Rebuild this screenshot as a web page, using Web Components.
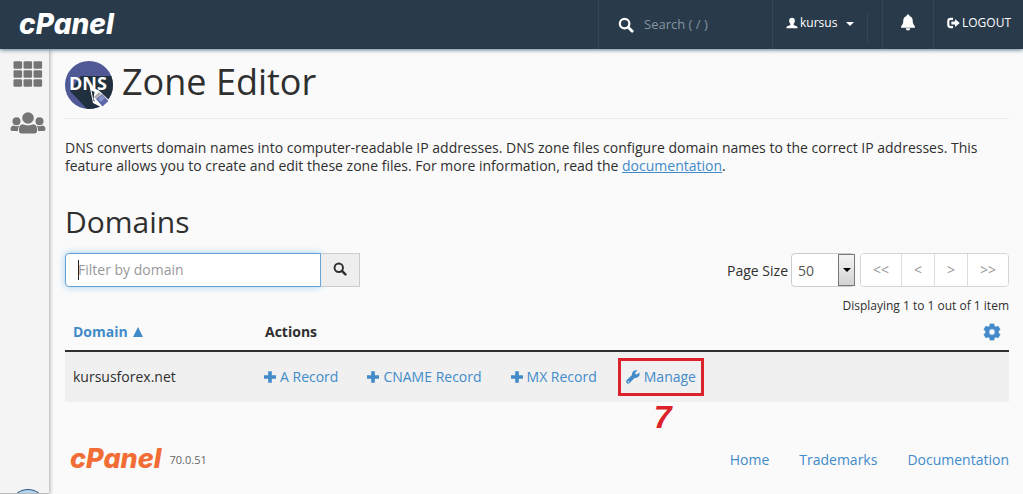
<!DOCTYPE html>
<html lang="en">
<head>
<meta charset="utf-8">
<title>cPanel - Zone Editor</title>
<style>
  body { margin: 0; background: #fafafa; color: #2f2f2f; font: 14px/18px "Open Sans", "Noto Sans", sans-serif; --link: #428bca; --bar: #293a4a; }
</style>
</head>
<body>
<cp-app>
  <cp-header slot="header" user="kursus"></cp-header>
  <cp-sidebar slot="side"></cp-sidebar>
  <cp-title>Zone Editor</cp-title>
  <cp-intro>DNS converts domain names into computer-readable IP addresses. DNS zone files configure domain names to the correct IP addresses. This feature allows you to create and edit these zone files. For more information, read the <a href="#documentation">documentation</a>.</cp-intro>
  <cp-section heading="Domains">
    <cp-filter></cp-filter>
    <cp-pager></cp-pager>
    <zone-table slot="body"></zone-table>
  </cp-section>
  <cp-footer version="70.0.51"></cp-footer>
</cp-app>

<script>
const define = (name, html, setup) => {
  const template = document.createElement('template');
  template.innerHTML = '<style>:host,*{box-sizing:border-box}</style>' + html;
  customElements.define(name, class extends HTMLElement {
    constructor() {
      super();
      this.attachShadow({ mode: 'open' }).append(template.content.cloneNode(true));
    }
    connectedCallback() { if (setup) setup(this, this.shadowRoot); }
  });
};

const icons = {
  search: ['0 0 16 16', '<circle cx="6.6" cy="6.6" r="4.8" fill="none" stroke="currentColor" stroke-width="2.2"/><path d="M10.2 10.200L14.200 14.200" stroke="currentColor" stroke-width="2.800" stroke-linecap="round"/>'],
  user: ['0 0 14 14', '<path d="M7 .8C9.200.8 10.300 2.300 10.300 4.300C10.300 5.900 9.700 7.200 8.900 8V9.200L12.400 10.700C13.300 11.100 13.500 11.800 13.500 13H.5C.5 11.800.7 11.100 1.600 10.700L5.100 9.200V8C4.300 7.200 3.700 5.900 3.700 4.300C3.700 2.300 4.800.8 7 .8Z"/>'],
  bell: ['0 0 16 18', '<path d="M8 .5C9 .5 9.500 1.100 9.500 2C12 2.700 13 4.700 13 7C13 10 13.700 11.500 15.300 13V14.500H.7V13C2.300 11.500 3 10 3 7C3 4.700 4 2.700 6.500 2C6.500 1.100 7 .5 8 .5ZM5.700 15H10.300C10.300 16.500 9.300 17.400 8 17.400S5.700 16.500 5.700 15Z"/>'],
  logout: ['0 0 14 12', '<path d="M6.500 1.500H4Q1.400 1.500 1.400 4V8Q1.400 10.500 4 10.500H6.500" fill="none" stroke="currentColor" stroke-width="2.300"/><path d="M4.700 4.500H8.700V1.700L13.700 6L8.700 10.300V7.500H4.700Z"/>'],
  plus: ['0 0 12 12', '<path d="M4.200.2H7.800V4.200H12V7.800H7.800V11.800H4.200V7.800H0V4.200H4.200Z"/>'],
  wrench: ['0 0 14 14', '<path d="M13.300 2.500L10.900 4.500L9.300 3.900L9.200 2.500L11.500.5C9.400-.3 6.900.6 6.200 3C5.900 4.100 6.100 4.800 5.700 5.300L.8 10.100C-.2 11.100.1 12.200.8 13C1.500 13.900 2.700 14 3.700 13.100L8.200 8.300C8.700 7.900 9.500 8 10.500 7.700C13.200 7.100 14.200 4.500 13.300 2.500ZM2.300 11A.7.7 0 1 1 2.200 12.300A.7.7 0 0 1 2.300 11Z"/>'],
  cog: ['0 0 20 20', '<path fill-rule="evenodd" stroke="currentColor" stroke-width=".8" stroke-linejoin="round" d="M8 1H12L12.600 3.600L14.100 4.400L16.800 3.600L19 7.200L17 9V11L19 12.800L16.800 16.400L14.100 15.600L12.600 16.400L12 19H8L7.400 16.400L5.900 15.600L3.200 16.400L1 12.800L3 11V9L1 7.200L3.200 3.600L5.900 4.400L7.400 3.600ZM10 6.500A3.500 3.500 0 1 0 10 13.500A3.500 3.500 0 1 0 10 6.500Z"/>'],
  grid: ['0 0 30 26', [0, 9, 18].map(y => [0, 10, 20].map(x => `<rect x="${x + .5}" y="${y + .3}" width="8.600" height="7.500" rx="1.200"/>`).join('')).join('')],
  users: ['0 0 36 22', '<circle cx="18" cy="6" r="5.800"/><circle cx="6.500" cy="9.300" r="4"/><circle cx="29.500" cy="9.300" r="4"/><path d="M12.500 12.300Q18 14.600 23.500 12.300Q27 12.700 27 17V19Q27 21.500 24.500 21.500H11.500Q9 21.500 9 19V17Q9 12.700 12.500 12.300ZM3.500 13.400Q6 14.700 9 13.700Q8 15.500 8 19H2Q.5 19 .5 17.200Q.5 13.800 3.500 13.400ZM32.500 13.400Q30 14.700 27 13.700Q28 15.500 28 19H34Q35.500 19 35.500 17.200Q35.500 13.800 32.500 13.400Z"/>'],
  sort: ['0 0 10 10', '<path d="M5 0L10 10H0Z"/>'],
  caret: ['0 0 8 4', '<path d="M0 0H8L4 4Z"/>']
};
define('cp-icon', `<style>:host{display:inline-block;flex:none;width:14px;height:14px}svg{display:block;width:100%;height:100%;fill:currentColor}</style><svg aria-hidden="true"></svg>`, (el, root) => {
  const [box, art] = icons[el.getAttribute('name')];
  const svg = root.querySelector('svg');
  svg.setAttribute('viewBox', box);
  svg.innerHTML = art;
});

define('cp-brand', `<style>:host{display:block;font:italic 800 var(--brand-size,28px)/24px Inter,"Open Sans",sans-serif}</style>cPanel`);

define('cp-app', `<style>
  :host{display:flex;flex-direction:column;min-height:100vh}
  .body{display:flex;flex:1}
  main{flex:1;min-width:0;padding:12px 14px 0 16px}
</style><slot name="header"></slot><div class="body"><slot name="side"></slot><main><slot></slot></main></div>`);

define('cp-header', `<style>
  :host{display:flex;align-items:stretch;height:49px;background:var(--bar);color:#fff;position:relative;z-index:2;box-shadow:0 1px 4px #5b7b90}
  .brand{margin:12px auto 0 19px;color:#fff;text-decoration:none}
  .cell{display:flex;align-items:center;border-left:1px solid #364858}
  .search{width:174px;padding-left:19px;gap:10px}
  .search cp-icon{width:16px;height:16px}
  input{width:110px;height:18px;margin-bottom:2px;border:0;padding:0;background:none;color:#fff;font:13px/18px "Open Sans",sans-serif;outline:0}
  input::placeholder{color:#8795a0;opacity:1}
  button,a.out{font:12px/18px "Open Sans",sans-serif;color:#fff;background:none;border:0;padding:0;text-decoration:none;display:flex;align-items:center}
  .user{width:110px;padding:0 14px 4px 13px}
  .user button{gap:2px;width:100%;height:30px;white-space:nowrap}
  .user cp-icon{width:12px;height:12px}
  .user cp-icon.c{width:8px;height:4px;margin:2px 0 0 7px}
  .rule{width:1px;height:30px;background:#364858;margin:10px 0 0 auto}
  .bell{width:51px;justify-content:center;padding-bottom:4px}
  .bell cp-icon{width:16px;height:17px}
  .logout{width:90px;padding:0 0 4px 13px}
  .out{gap:2px}
  .out cp-icon{width:13px;height:12px}
</style>
<a class="brand" href="#home"><cp-brand></cp-brand></a>
<label class="cell search"><cp-icon name="search"></cp-icon><input type="text" placeholder="Search ( / )" aria-label="Search"></label>
<div class="cell user"><button type="button"><cp-icon name="user"></cp-icon><span id="name"></span><cp-icon class="c" name="caret"></cp-icon><span class="rule"></span></button></div>
<div class="cell bell"><button type="button" aria-label="Notifications"><cp-icon name="bell"></cp-icon></button></div>
<div class="cell logout"><a class="out" href="#logout"><cp-icon name="logout"></cp-icon>LOGOUT</a></div>`,
(el, root) => { root.getElementById('name').textContent = el.getAttribute('user'); });

define('cp-sidebar', `<style>
  :host{display:flex;flex-direction:column;align-items:center;flex:none;width:49px;padding:12px 0 0 6px;background:#f4f4f4;box-shadow:1px 0 4px #aaa;color:#757575}
  a{color:inherit}
  cp-icon{display:block}
  .grid{width:30px;height:26px}
  .users{width:36px;height:22px;margin-top:25px}
  .status{align-self:stretch;margin:auto 0 0 -6px;padding-left:9px;height:5px;overflow:hidden;border-bottom:1px solid #bbb}
  .status::before{content:"";display:block;width:36px;height:36px;border:1px solid #2c5580;border-radius:50%;background:#b5d3ee}
</style><a href="#home" aria-label="Home"><cp-icon class="grid" name="grid"></cp-icon></a><a href="#users" aria-label="User manager"><cp-icon class="users" name="users"></cp-icon></a><div class="status"></div>`);

define('cp-title', `<style>
  :host{display:flex;gap:9px;padding-bottom:9px;border-bottom:1px solid #eaeaea}
  svg{flex:none;width:48px;height:48px}
  h1{margin:0;font-size:36px;line-height:42px;font-weight:400}
</style><svg viewBox="0 0 48 48" aria-hidden="true">
  <defs><clipPath id="disc"><circle cx="24" cy="24" r="24"/></clipPath></defs>
  <g clip-path="url(#disc)"><rect width="48" height="48" fill="#505996"/>
  <path d="M16 15H48V48H22L5 30Z" fill="#20303e"/></g>
  <text x="4" y="29" font-family="Open Sans" font-weight="700" font-size="18" fill="#fff">DNS</text>
  <path d="M24.500 25L34 29.500L45.500 40.500L39 47.500L28 42Z" fill="#fff"/>
  <path d="M26.500 29.500L29.500 31L28.500 38L30 40.500L28.500 40Z" fill="#20303e"/>
  <path d="M29 36L34 31L36 33L31 38Z" fill="#aaa"/>
  <path d="M31 38L37 33L43.500 40L37.500 45.500Z" fill="#5c68a8"/><path d="M33 38L37 34L40 37L36 41Z" fill="#8995c8"/>
</svg><h1><slot></slot></h1>`);

define('cp-intro', `<style>:host{display:block;margin-top:20px}p{margin:0}::slotted(a){color:var(--link);text-decoration:underline}</style><p><slot></slot></p>`);

define('cp-section', `<style>
  :host{display:block;margin-top:30px}
  h2{margin:0 0 15px;font-size:30px;line-height:33px;font-weight:400}
  .tools{display:flex;justify-content:space-between}
</style><h2></h2><div class="tools"><slot></slot></div><slot name="body"></slot>`,
(el, root) => { root.querySelector('h2').textContent = el.getAttribute('heading'); });

define('cp-filter', `<style>
  :host{display:block}
  form{display:flex;position:relative}
  form::before{content:"";position:absolute;left:13px;top:7px;width:1px;height:20px;background:#222}
  input{width:256px;height:34px;padding:0 12px 2px;border:1px solid #66a3d8;border-radius:4px 0 0 4px;background:#fff;box-shadow:0 0 7px #9fcdf0;font:14px/20px "Open Sans",sans-serif;color:#555;outline:0}
  input::placeholder{color:#999;opacity:1}
  button{width:39px;height:34px;padding:0;border:1px solid #ccc;border-left:0;background:#eee;color:#2f2f2f;display:grid;place-items:center}
  button cp-icon{margin-bottom:2px}
</style><form><input type="text" placeholder="Filter by domain" aria-label="Filter by domain"><button type="button" aria-label="Search domains"><cp-icon name="search"></cp-icon></button></form>`);

define('cp-pager', `<style>
  :host{display:block}
  .row{display:flex;align-items:center;justify-content:flex-end}
  label{margin:2px 3px 0 0}
  .pick{position:relative;margin-right:5px}
  select{display:block;appearance:none;width:64px;height:34px;padding:2px 6px 0;border:1px solid #ccc;border-radius:4px;background:#fff;color:#555;font:14px/20px "Open Sans",sans-serif}
  .drop{position:absolute;right:0;top:1px;width:17px;height:32px;border:1px solid #777;background:linear-gradient(#f4f4f4,#d2d2d2);display:grid;place-items:center;color:#000;pointer-events:none}
  .drop cp-icon{width:8px;height:4px}
  nav{display:flex;border:1px solid #d5d5d5;border-radius:4px;background:#fff;overflow:hidden}
  button{width:33px;height:32px;border:0;border-left:1px solid #ddd;padding:0;background:#fff;color:#999;font:14px/20px "Open Sans",sans-serif}
  button:first-child{width:40px;border-left:0}
  button:last-child{width:41px}
  p{margin:10px 0 0;font-size:12px;text-align:right}
</style><div class="row"><label for="size">Page Size</label><div class="pick"><select id="size"><option>50</option><option>100</option></select><span class="drop"><cp-icon name="caret"></cp-icon></span></div>
<nav aria-label="Pages"><button type="button">&lt;&lt;</button><button type="button">&lt;</button><button type="button">&gt;</button><button type="button">&gt;&gt;</button></nav></div>
<p>Displaying 1 to 1 out of 1 item</p>`);

define('zone-table', `<style>
  :host{display:block}
  table{width:100%;border-collapse:separate;border-spacing:0}
  th{height:37px;padding:0 8px 2px;text-align:left;font-weight:700;border-bottom:2px solid #2f2f2f}
  th:first-child{width:192px}
  th:last-child{text-align:right}
  td{height:50px;padding:0 8px;background:#f0f0f0}
  a{color:var(--link);text-decoration:none}
  .sort cp-icon{width:10px;height:10px;margin-left:5px}
  th button{border:0;padding:0;background:none;color:var(--link);vertical-align:middle}
  th button cp-icon{display:block;width:18px;height:18px}
  .links{display:flex;align-items:center;gap:29px;margin-left:-1px}
  .links a{display:flex;align-items:center;gap:4px;white-space:nowrap}
  .links cp-icon{width:12px;height:12px}
  .marked{position:relative}
  .mark{position:absolute;inset:-10px -8px;border:3px solid #dc232b;pointer-events:none}
  .step{position:absolute;top:33px;left:28px;color:#dc232b;font:italic 700 32px/32px "Liberation Sans",sans-serif}
  .links .marked cp-icon{width:14px;height:14px}
</style><table><thead><tr><th><a class="sort" href="#sort">Domain<cp-icon name="sort"></cp-icon></a></th><th>Actions</th><th><button type="button" aria-label="Table settings"><cp-icon name="cog"></cp-icon></button></th></tr></thead>
<tbody><tr><td>kursusforex.net</td><td colspan="2"><div class="links">
<a href="#a"><cp-icon name="plus"></cp-icon>A Record</a><a href="#cname"><cp-icon name="plus"></cp-icon>CNAME Record</a><a href="#mx"><cp-icon name="plus"></cp-icon>MX Record</a><a class="marked" href="#manage"><cp-icon name="wrench"></cp-icon>Manage<span class="mark"></span><span class="step">7</span></a></div></td></tr></tbody></table>`);

define('cp-footer', `<style>
  :host{display:flex;align-items:center;margin-top:45px;padding-left:5px;--brand-size:27px}
  .brand{color:#f26d35;text-decoration:none}
  .version{margin:2px 0 0 8px;font-size:11px;color:#666}
  nav{display:flex;gap:30px;margin:2px 0 0 auto}
  nav a{color:var(--link);text-decoration:none}
</style><a class="brand" href="#home"><cp-brand></cp-brand></a><span class="version"></span>
<nav><a href="#home">Home</a><a href="#trademarks">Trademarks</a><a href="#documentation">Documentation</a></nav>`,
(el, root) => { root.querySelector('.version').textContent = el.getAttribute('version'); });
</script>
</body>
</html>
